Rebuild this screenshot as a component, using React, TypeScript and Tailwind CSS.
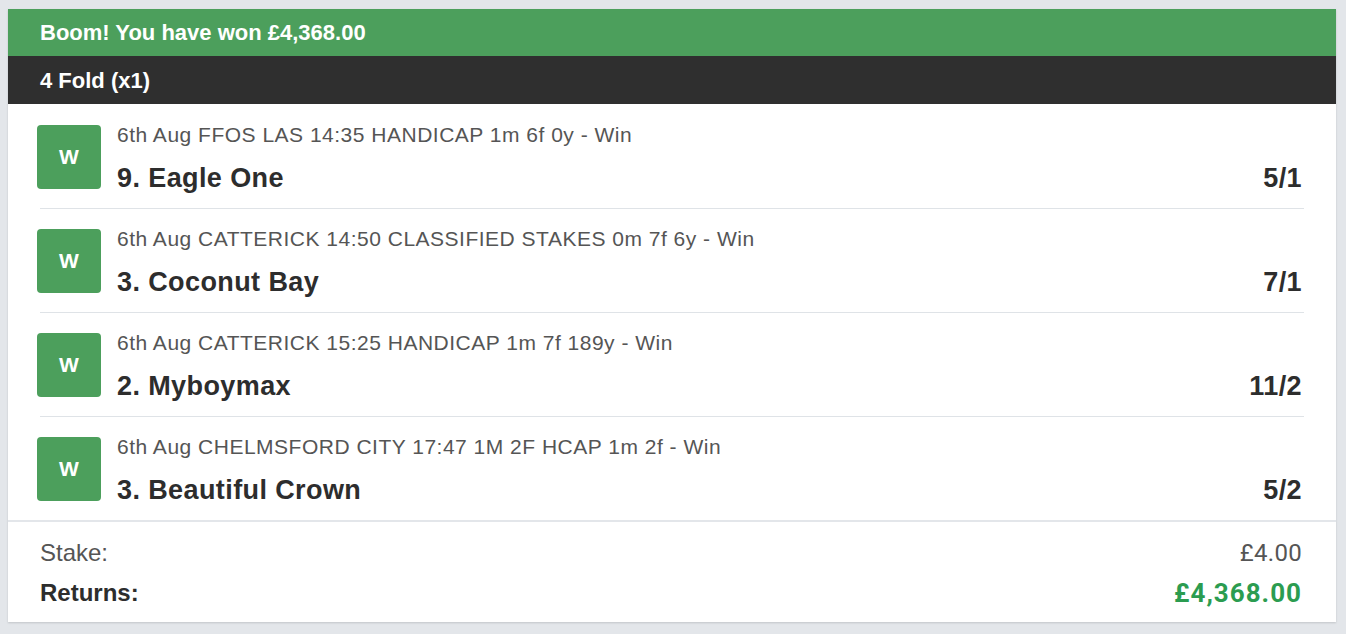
import React from "react";

const legs = [
  { meta: "6th Aug FFOS LAS 14:35 HANDICAP 1m 6f 0y - Win", name: "9. Eagle One", odds: "5/1" },
  { meta: "6th Aug CATTERICK 14:50 CLASSIFIED STAKES 0m 7f 6y - Win", name: "3. Coconut Bay", odds: "7/1" },
  { meta: "6th Aug CATTERICK 15:25 HANDICAP 1m 7f 189y - Win", name: "2. Myboymax", odds: "11/2" },
  { meta: "6th Aug CHELMSFORD CITY 17:47 1M 2F HCAP 1m 2f - Win", name: "3. Beautiful Crown", odds: "5/2" },
];

export default function App() {
  return (
    <div
      className="min-h-[634px] w-full bg-[#e3e6ea] pt-[9px] pl-2 pr-[10px]"
      style={{ fontFamily: '"Liberation Sans", Arial, sans-serif' }}
    >
      <div className="bg-white shadow-[0_1px_2px_rgba(0,0,0,0.15)]">
        <div className="h-[47px] bg-[#4c9f5c] px-8 flex items-center text-white font-bold text-[22px]">
          Boom! You have won £4,368.00
        </div>
        <div className="h-[48px] bg-[#2f2f2f] px-8 flex items-center text-white font-bold text-[22px]">
          4 Fold (x1)
        </div>
        <div className="pt-[1px]">
          {legs.map((leg, i) => (
            <div key={i} className="px-8">
              <div
                className={
                  "flex pt-5 pb-[19px] " +
                  (i < legs.length - 1 ? "border-b border-[#dfe3e7]" : "")
                }
              >
                <div className="-ml-[3px] w-16 h-16 rounded-[4px] bg-[#4c9f5c] flex items-center justify-center text-white font-bold text-[21px] shrink-0">
                  W
                </div>
                <div className="ml-4 flex-1 min-w-0 h-16 flex flex-col justify-between">
                  <div className="-mt-[1px] text-[21px] leading-[22px] tracking-[0.5px] text-[#555555]">
                    {leg.meta}
                  </div>
                  <div className="flex items-end justify-between -mb-[3px]">
                    <div className="text-[27px] leading-[28px] tracking-[0.4px] font-bold text-[#2d2d2d]">
                      {leg.name}
                    </div>
                    <div className="mr-[2px] text-[27px] leading-[28px] tracking-[0.4px] font-bold text-[#2d2d2d]">
                      {leg.odds}
                    </div>
                  </div>
                </div>
              </div>
            </div>
          ))}
        </div>
        <div className="border-t-2 border-[#e3e6ea] pl-8 pr-[34px] pt-[17px] pb-[15px]">
          <div className="flex justify-between items-center h-[28px]">
            <span className="text-[24px] text-[#555555]">Stake:</span>
            <span
              className="text-[24px] text-[#555555] tracking-[0.3px]"
              style={{ fontFamily: "Roboto, sans-serif" }}
            >
              £4.00
            </span>
          </div>
          <div className="flex justify-between items-center h-[28px] mt-[12px]">
            <span className="text-[24px] font-bold text-[#2d2d2d]">Returns:</span>
            <span
              className="text-[26px] font-bold text-[#2b9c50] tracking-[1px]"
              style={{ fontFamily: "Roboto, sans-serif" }}
            >
              £4,368.00
            </span>
          </div>
        </div>
      </div>
    </div>
  );
}
